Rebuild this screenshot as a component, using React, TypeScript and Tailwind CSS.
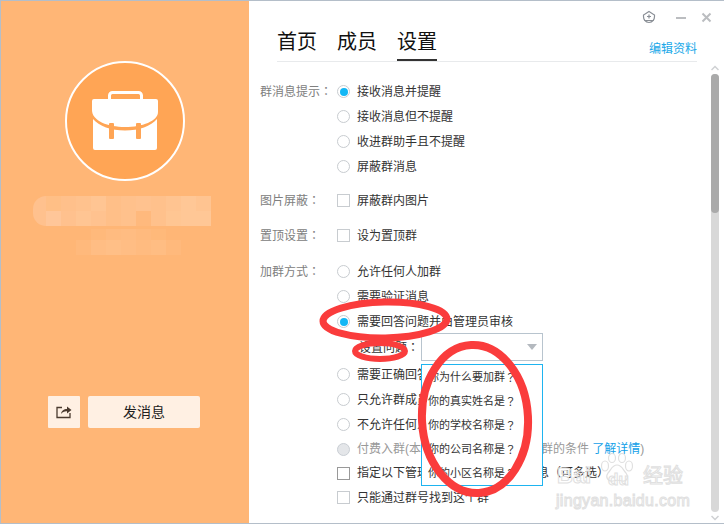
import React from "react";

const mosaic1 = ["#ffbf86", "#ffc08b", "#ffc28e", "#ffc593", "#ffbf88", "#ffc18c", "#ffc28f", "#ffc18c", "#ffc491", "#ffc796", "#ffc491"];
const mosaic2 = ["#ffc699", "#ffc18e", "#ffc593", "#ffc28f", "#ffbf88", "#ffc18c", "#ffb97d", "#ffc18c", "#ffc693", "#ffc796", "#ffc796"];
const mosaic3a = ["#ffb97b", "#ffbb80", "#ffbc82", "#ffba7e", "#ffb97a"];
const mosaic3b = ["#ffb97c", "#ffbd84", "#ffbf87", "#ffbd84", "#ffbb80", "#ffbd83", "#ffb97c"];

function Radio({ on, disabled }: { on?: boolean; disabled?: boolean }) {
  return (
    <span
      className={`w-[13px] h-[13px] rounded-full border shrink-0 flex items-center justify-center ${
        disabled ? "bg-[#e4e6e9] border-[#c9ced4]" : "bg-white border-[#c8ccd0]"
      }`}
    >
      {on && <span className="w-[8px] h-[8px] rounded-full bg-[#12b7f5]" />}
    </span>
  );
}

function Check({ dark }: { dark?: boolean }) {
  return <span className={`w-[13px] h-[13px] border shrink-0 bg-white ${dark ? "border-[#999999]" : "border-[#c8ccd0]"}`} />;
}

function Mark({ children }: { children: React.ReactNode }) {
  return <span className="font-['Noto_Sans_CJK_TC',sans-serif]">{children}</span>;
}

function Row({ h, label, children }: { h: string; label?: string; children: React.ReactNode }) {
  return (
    <div className={`flex items-center ${h}`}>
      <span className="w-[77px] shrink-0 text-[#808080]">
        {label}
        {label && <Mark>：</Mark>}
      </span>
      {children}
    </div>
  );
}

function Opt({ children, cls = "text-[#333333]" }: { children: React.ReactNode; cls?: string }) {
  return <span className={`ml-[7px] whitespace-nowrap ${cls}`}>{children}</span>;
}

export default function App() {
  return (
    <div className="relative w-[724px] h-[524px] overflow-hidden bg-white flex border-t border-l border-b border-[#b4bec9] font-['Liberation_Sans','Noto_Sans_CJK_SC',sans-serif] text-[12px] leading-none">
      <aside className="w-[248px] shrink-0 bg-[#ffb676] flex flex-col items-center">
        <div className="mt-[60px] w-[120px] h-[120px] rounded-full border-[2px] border-white bg-[#ffa555] flex items-center justify-center">
          <svg width="70" height="62" viewBox="0 0 70 62" className="mt-[-1px]">
            <rect x="19.5" y="2.5" width="32" height="10" rx="3" fill="none" stroke="white" strokeWidth="3" />
            <path d="M4 9H66a2 2 0 0 1 2 2V22C68 31 52 37 35 37C18 37 2 31 2 20V11a2 2 0 0 1 2-2Z" fill="white" />
            <path d="M3 29C9 36 21 40.500 35 40.500C49 40.500 61 36 67 29V58a2 2 0 0 1-2 2H5a2 2 0 0 1-2-2Z" fill="white" />
            <rect x="19" y="33" width="5" height="16" rx="1" fill="#ffa555" />
            <rect x="46" y="33" width="5" height="16" rx="1" fill="#ffa555" />
          </svg>
        </div>
        <div className="mt-[15px] ml-[-6px] relative w-[178px] h-[30px] flex flex-col">
          <div className="flex pl-[13px] h-[15px]">
            {mosaic1.map((c, i) => (
              <span key={i} className="w-[15px] h-full" style={{ background: c }} />
            ))}
          </div>
          <div className="flex h-[15px]">
            <span className="w-[13px] h-full rounded-bl-[14px] bg-[#ffc18e]" />
            {mosaic2.map((c, i) => (
              <span key={i} className="w-[15px] h-full" style={{ background: c }} />
            ))}
          </div>
          <span className="absolute left-0 top-0 w-[13px] h-[15px] rounded-tl-[14px] bg-[#ffc18e]" />
        </div>
        <div className="mt-[3px] ml-[7px] flex flex-col w-[105px]">
          <div className="flex h-[11px] pl-[15px]">
            {mosaic3a.map((c, i) => (
              <span key={i} className="w-[15px] h-full" style={{ background: c }} />
            ))}
          </div>
          <div className="flex h-[15px]">
            {mosaic3b.map((c, i) => (
              <span key={i} className="w-[15px] h-full" style={{ background: c }} />
            ))}
          </div>
        </div>
        <div className="mt-auto mb-[95px] flex gap-[8px] ml-[-2px]">
          <button className="w-[32px] h-[32px] rounded-[1px] bg-[#fff0e3] flex items-center justify-center">
            <svg width="16" height="14" viewBox="0 0 16 14">
              <path d="M6 2.500H1V12.500H14V8" fill="none" stroke="#4a3a2e" strokeWidth="1.300" />
              <path d="M5 9C5.500 5.500 8 4 11 4V1.500L15.500 5L11 8.500V6.200C8.500 6 6.500 7 5 9Z" fill="#4a3a2e" />
            </svg>
          </button>
          <button className="w-[112px] h-[32px] rounded-[2px] bg-[#fff0e3] text-[14px] text-[#222222]">发消息</button>
        </div>
      </aside>

      <main className="relative flex-1 flex flex-col pl-[28px] pr-[27px]">
        <div className="h-[61px] flex items-end justify-between border-b border-[#e8eaec]">
          <div className="flex gap-[20px] text-[20px] text-[#111111]">
            <span className="h-[29px]">首页</span>
            <span className="h-[29px]">成员</span>
            <span className="h-[29px] border-b-[2px] border-[#333333]">设置</span>
          </div>
          <span className="text-[#20a8e8] mb-[6px]">编辑资料</span>
        </div>
        <div className="ml-[-17px] mt-[17px] flex flex-col">
          <Row h="h-[25px]" label="群消息提示"><Radio on /><Opt>接收消息并提醒</Opt></Row>
          <Row h="h-[25px]"><Radio /><Opt>接收消息但不提醒</Opt></Row>
          <Row h="h-[25px]"><Radio /><Opt>收进群助手且不提醒</Opt></Row>
          <Row h="h-[25px]"><Radio /><Opt>屏蔽群消息</Opt></Row>
          <div className="h-[9px]" />
          <Row h="h-[25px]" label="图片屏蔽"><Check /><Opt>屏蔽群内图片</Opt></Row>
          <div className="h-[10px]" />
          <Row h="h-[25px]" label="置顶设置"><Check /><Opt>设为置顶群</Opt></Row>
          <div className="h-[11px]" />
          <Row h="h-[25px]" label="加群方式"><Radio /><Opt>允许任何人加群</Opt></Row>
          <Row h="h-[25px]"><Radio /><Opt>需要验证消息</Opt></Row>
          <Row h="h-[25px]"><Radio on /><Opt>需要回答问题并由管理员审核</Opt></Row>
          <div className="flex items-center h-[28px] pl-[99px] mt-[-1px]">
            <span className="text-[#333333] w-[62px] whitespace-nowrap">设置问题<Mark>：</Mark></span>
            <div className="w-[122px] h-[28px] border border-[#b8c4ce] bg-white flex items-center justify-end pr-[4px]">
              <svg width="12" height="7" viewBox="0 0 12 7"><path d="M1 0H11L6 6Z" fill="#b4b9bf" /></svg>
            </div>
          </div>
          <div className="h-[1px]" />
          <Row h="h-[25px]"><Radio /><Opt>需要正确回答问题并由管理员审核</Opt></Row>
          <Row h="h-[25px]"><Radio /><Opt>只允许群成员邀请加入</Opt></Row>
          <Row h="h-[25px]"><Radio /><Opt>不允许任何人加群</Opt></Row>
          <Row h="h-[24px]">
            <Radio disabled />
            <Opt cls="text-[#999999]">
              付费入群(本群设置付费作为加入本群的条件 <span className="text-[#12a0e8]">了解详情</span>)
            </Opt>
          </Row>
          <Row h="h-[24px]"><Check dark /><Opt>指定以下管理员和群主接收加群消息（可多选）</Opt></Row>
          <Row h="h-[25px]"><Check /><Opt>只能通过群号找到这个群</Opt></Row>
        </div>
      </main>

      {/* window controls */}
      <svg className="absolute left-[640px] top-[8px]" width="76" height="18" viewBox="0 0 76 18">
        <path d="M8 2.500L13.500 6V7.500C13.500 10 12 13.500 8 13.500C4 13.500 2.500 10 2.500 7.500V6Z M3 11.500H13" fill="none" stroke="#8a8f96" strokeWidth="1.200" />
        <path d="M8 5.500V9.500M6 7.500H10" stroke="#8a8f96" strokeWidth="1.200" />
        <path d="M35 9H45" stroke="#bbbdc0" strokeWidth="2" />
        <path d="M61.500 4.500L69.500 12.500M69.500 4.500L61.500 12.500" stroke="#bbbdc0" strokeWidth="2" />
      </svg>

      {/* scrollbar */}
      <div className="absolute left-[710px] top-[73px] w-[8px] h-[438px] rounded-[4px] bg-[#d8d8d8]">
        <div className="h-[139px] rounded-[4px] bg-[#aaaaaa]" />
      </div>
      <svg className="absolute left-[710px] top-[64px]" width="8" height="6" viewBox="0 0 8 6"><path d="M0.500 5L4 1.500L7.500 5" fill="none" stroke="#cfd1d3" strokeWidth="1.500" /></svg>
      <svg className="absolute left-[710px] top-[514px]" width="8" height="6" viewBox="0 0 8 6"><path d="M0.500 1L4 4.500L7.500 1" fill="none" stroke="#cfd1d3" strokeWidth="1.500" /></svg>

      {/* open dropdown */}
      <div className="absolute left-[420px] top-[363px] w-[122px] h-[122px] border border-[#1eb4f0] bg-white flex flex-col pt-[1px] text-[11px] text-[#333333]">
        {["你为什么要加群", "你的真实姓名是", "你的学校名称是", "你的公司名称是", "你的小区名称是"].map((t) => (
          <span key={t} className="h-[24px] flex items-center pl-[6px] whitespace-nowrap">
            {t}
            <Mark>？</Mark>
          </span>
        ))}
      </div>

      {/* watermark */}
      <div className="absolute left-[555px] top-[450px] w-[135px] h-[58px] text-transparent [-webkit-text-stroke:1px_#e0e0e0] pointer-events-none">
        <span className="absolute left-[1px] top-[14px] text-[22px] font-bold">Bai</span>
        <span className="absolute left-[52px] top-[20px] text-[17px] font-bold">du</span>
        <span className="absolute left-[87px] top-[15px] text-[20px]">经验</span>
        <span className="absolute left-0 top-[42px] text-[16px] tracking-[0.3px] whitespace-nowrap">jingyan.baidu.com</span>
        <svg className="absolute left-[40px] top-[2px]" width="40" height="32" viewBox="0 0 40 32">
          <g fill="none" stroke="#e0e0e0" strokeWidth="1.200">
            <ellipse cx="9" cy="13" rx="3.500" ry="5" />
            <ellipse cx="16" cy="5" rx="3.500" ry="4.500" />
            <ellipse cx="26" cy="5" rx="3.500" ry="4.500" />
            <ellipse cx="33" cy="13" rx="3.500" ry="5" />
            <path d="M21 12C16 12 15 17 12 20C9 24 12 29 17 28C20 27 23 27 26 28C31 29 33 24 30 20C27 17 26 12 21 12Z" />
          </g>
        </svg>
      </div>

      {/* red hand-drawn annotations */}
      <svg className="absolute left-[-1px] top-[-1px] pointer-events-none" width="724" height="524" viewBox="0 0 724 524">
        <g fill="none" stroke="#fa3c3c">
          <ellipse cx="385" cy="320" rx="62" ry="18" strokeWidth="7" transform="rotate(-1 385 320)" />
          <ellipse cx="380" cy="351" rx="25" ry="8" strokeWidth="6" />
          <ellipse cx="475" cy="419" rx="53" ry="74" strokeWidth="8" transform="rotate(-3 475 419)" />
        </g>
      </svg>
    </div>
  );
}
